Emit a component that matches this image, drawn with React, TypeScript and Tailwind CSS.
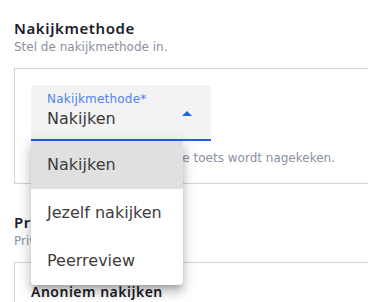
import { ReactNode } from "react"

const body = { fontFamily: '"DejaVu Sans", sans-serif' }
const heading = { fontFamily: '"Noto Sans", sans-serif' }

function Section({ title, subtitle, children }: { title: string; subtitle: string; children: ReactNode }) {
    return (
        <div className="flex flex-col">
            <h2 className="text-[15px] leading-5 font-semibold tracking-[0.6px] text-[#1c1c2b]" style={heading}>
                {title}
            </h2>
            <p className="mt-[1px] text-[12px] leading-4 text-[#8b919e]">{subtitle}</p>
            <div className="mt-[13px] w-[420px] border border-[#d4d4d8]">{children}</div>
        </div>
    )
}

export default function App() {
    const options = ["Nakijken", "Jezelf nakijken", "Peerreview"]

    return (
        <div className="relative w-[368px] h-[302px] overflow-hidden bg-white" style={body}>
            <div className="flex flex-col pl-[14px] pt-[18px] gap-[28px]">
                <Section title="Nakijkmethode" subtitle="Stel de nakijkmethode in.">
                    <div className="px-4 pt-4 pb-[17px]">
                        {/* Select field */}
                        <div className="relative w-[180px] h-[56px] bg-[#f3f3f3] rounded-t border-b-2 border-[#1f5fe8] flex items-start justify-between pl-4 pr-[19px]">
                            <div className="flex flex-col pt-[6px]">
                                <span className="text-[12px] leading-4 tracking-[0.2px] text-[#4f83ee]">Nakijkmethode*</span>
                                <span className="text-[16px] leading-6 text-[#3a3a3a]">Nakijken</span>
                            </div>
                            <svg width="10" height="5" viewBox="0 0 10 5" className="mt-[26px]">
                                <path d="M0 5 L5 0 L10 5 Z" fill="#2563eb" />
                            </svg>
                        </div>
                        <p className="mt-[9px] pl-[30px] text-[12px] leading-4 whitespace-nowrap text-[#8b919e]">
                            Selecteer hier hoe de toets wordt nagekeken.
                        </p>
                    </div>
                </Section>

                <Section title="Privacy" subtitle="Privacy-instellingen.">
                    <div className="px-4 pt-[17px] pb-4">
                        <span className="text-[14px] leading-5 font-semibold tracking-[0.5px] text-[#1c1c2b]" style={heading}>
                            Anoniem nakijken
                        </span>
                    </div>
                </Section>
            </div>

            {/* Dropdown menu */}
            <ul className="absolute left-[31px] top-[141px] w-[152px] bg-white rounded-b shadow-[0_5px_5px_-3px_rgba(0,0,0,0.2),0_8px_10px_1px_rgba(0,0,0,0.14),0_3px_14px_2px_rgba(0,0,0,0.12)]">
                {options.map((o, i) => (
                    <li
                        key={o}
                        className={`h-12 flex items-center px-4 text-[16px] text-[#3d3d3d] ${i === 0 ? "bg-[#e0e0e0]" : ""}`}
                    >
                        {o}
                    </li>
                ))}
            </ul>
        </div>
    )
}
